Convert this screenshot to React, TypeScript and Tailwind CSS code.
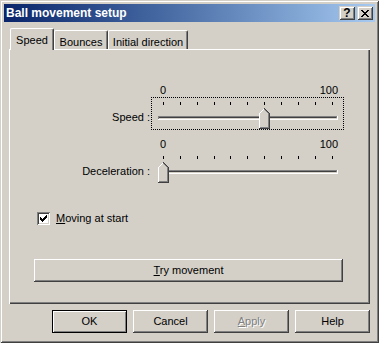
import React from "react";

const face = "bg-[#D4D0C8]";
const raised =
  "shadow-[inset_-1px_-1px_0_#404040,inset_1px_1px_0_#FFFFFF,inset_-2px_-2px_0_#808080,inset_2px_2px_0_#D4D0C8]";

const Thumb = ({ x }: { x: number }) => (
  <g transform={`translate(${x} 10)`}>
    <polygon points="0,5.5 5.5,0 11,5.5 11,21 0,21" fill="#D4D0C8" />
    <polyline points="0.5,20 0.5,5.5 5.5,0.5" fill="none" stroke="#FFFFFF" />
    <polyline points="5.5,1.5 9.5,5.5 9.5,19.5 1,19.5" fill="none" stroke="#808080" />
    <polyline points="5.5,0.5 10.5,5.5 10.5,20.5 0,20.5" fill="none" stroke="#404040" />
  </g>
);

const TrackBar = ({ thumbX, focused }: { thumbX: number; focused: boolean }) => (
  <div className="w-[193px]">
    <div className="flex h-[14px] items-center justify-between pl-[9px] pr-[6px] leading-[14px]">
      <span>0</span>
      <span>100</span>
    </div>
    <div
      className={`h-[33px] w-[193px] border border-dotted ${
        focused ? "border-black" : "border-transparent"
      }`}
    >
      <svg width={191} height={31} className="block" shapeRendering="crispEdges">
        {Array.from({ length: 11 }).map((_, i) => (
          <rect key={i} x={11 + Math.round(i * 16.87)} y={4} width={1} height={3} fill="#000" />
        ))}
        <rect x={6} y={18} width={180} height={4} fill="#FFFFFF" />
        <rect x={6} y={18} width={179} height={3} fill="#808080" />
        <rect x={7} y={19} width={177} height={1} fill="#404040" />
        <rect x={7} y={20} width={178} height={1} fill="#D4D0C8" />
        <Thumb x={thumbX} />
      </svg>
    </div>
  </div>
);

const Button = ({
  children,
  def,
  disabled,
}: {
  children: React.ReactNode;
  def?: boolean;
  disabled?: boolean;
}) => (
  <div
    className={`flex h-[23px] w-[75px] items-center justify-center ${face} ${
      def
        ? "border border-black shadow-[inset_1px_1px_0_#FFFFFF,inset_-1px_-1px_0_#808080]"
        : raised
    } ${disabled ? "text-[#808080] [text-shadow:1px_1px_0_#FFFFFF]" : "text-black"}`}
  >
    {children}
  </div>
);

export default function App() {
  return (
    <div
      className={`flex h-[343px] w-[379px] flex-col p-[4px] ${face} text-[11px] text-black font-['Liberation_Sans',Arial,sans-serif] shadow-[inset_1px_1px_0_#D4D0C8,inset_-1px_-1px_0_#404040,inset_2px_2px_0_#FFFFFF,inset_-2px_-2px_0_#808080]`}
    >
      {/* title bar */}
      <div className="flex h-[18px] items-center bg-gradient-to-r from-[#0A246A] to-[#A6CAF0] pl-[2px] pr-[2px]">
        <span className="flex-1 text-[12px] font-bold leading-[18px] text-white">
          Ball movement setup
        </span>
        <div className="flex gap-[2px]">
          <div
            className={`flex h-[14px] w-[16px] items-center justify-center ${face} shadow-[inset_1px_1px_0_#D4D0C8,inset_-1px_-1px_0_#404040,inset_2px_2px_0_#FFFFFF,inset_-2px_-2px_0_#808080] text-[12px] font-bold leading-none`}
          >
            ?
          </div>
          <div
            className={`flex h-[14px] w-[16px] items-center justify-center ${face} shadow-[inset_1px_1px_0_#D4D0C8,inset_-1px_-1px_0_#404040,inset_2px_2px_0_#FFFFFF,inset_-2px_-2px_0_#808080]`}
          >
            <svg width={8} height={7} shapeRendering="crispEdges">
              <path
                d="M0 0h2v1h-2zM6 0h2v1h-2zM1 1h2v1h-2zM5 1h2v1h-2zM2 2h4v1h-4zM3 3h2v1h-2zM2 4h4v1h-4zM1 5h2v1h-2zM5 5h2v1h-2zM0 6h2v1h-2zM6 6h2v1h-2z"
                fill="#000"
              />
            </svg>
          </div>
        </div>
      </div>

      <div className="flex flex-1 flex-col px-[5px]">
        {/* tabs */}
        <div className="mt-[6px] flex h-[21px] items-end">
          <div
            className={`relative z-10 -mb-px ml-[1px] flex h-[22px] w-[44px] items-start justify-center rounded-tl-[2px] rounded-tr-[2px] border-l border-t border-r border-l-white border-t-white border-r-[#404040] pt-[3px] ${face} shadow-[inset_-1px_0_0_#808080]`}
          >
            Speed
          </div>
          <div
            className={`flex h-[19px] w-[54px] items-start justify-center rounded-tl-[2px] rounded-tr-[2px] border-l border-t border-r border-l-white border-t-white border-r-[#404040] pt-[3px] ${face} shadow-[inset_-1px_0_0_#808080]`}
          >
            Bounces
          </div>
          <div
            className={`flex h-[19px] w-[80px] items-start justify-center rounded-tl-[2px] rounded-tr-[2px] border-l border-t border-r border-l-white border-t-white border-r-[#404040] pt-[3px] ${face} shadow-[inset_-1px_0_0_#808080]`}
          >
            Initial direction
          </div>
        </div>

        {/* tab panel */}
        <div
          className={`flex h-[255px] w-[361px] flex-col pt-[34px] ${face} shadow-[inset_1px_1px_0_#FFFFFF,inset_-1px_-1px_0_#404040,inset_-2px_-2px_0_#808080]`}
        >
          <div className="flex">
            <div className="w-[142px] pr-[1px] pt-[27px] text-right leading-[14px]">Speed :</div>
            <TrackBar thumbX={107} focused />
          </div>
          <div className="mt-[7px] flex">
            <div className="w-[142px] pr-[1px] pt-[27px] text-right leading-[14px]">
              Deceleration :
            </div>
            <TrackBar thumbX={6} focused={false} />
          </div>

          <div className="mt-[28px] flex h-[13px] items-center gap-[6px] pl-[28px]">
            <div className="flex h-[13px] w-[13px] items-center justify-center bg-white shadow-[inset_1px_1px_0_#808080,inset_-1px_-1px_0_#FFFFFF,inset_2px_2px_0_#404040,inset_-2px_-2px_0_#D4D0C8]">
              <svg width={7} height={7} shapeRendering="crispEdges">
                <path
                  d="M6 0h1v3h-1zM5 1h1v3h-1zM4 2h1v3h-1zM3 3h1v3h-1zM2 4h1v3h-1zM1 3h1v3h-1zM0 2h1v3h-1z"
                  fill="#000"
                />
              </svg>
            </div>
            <span className="leading-[13px]">
              <span className="underline underline-offset-[1px]">M</span>oving at start
            </span>
          </div>

          <div
            className={`ml-[25px] mt-[34px] flex h-[23px] w-[309px] items-center justify-center ${raised}`}
          >
            <span>
              <span className="underline underline-offset-[1px]">T</span>ry movement
            </span>
          </div>
        </div>

        {/* buttons */}
        <div className="mt-[6px] flex justify-end gap-[6px]">
          <Button def>OK</Button>
          <Button>Cancel</Button>
          <Button disabled>
            <span>
              <span className="underline underline-offset-[1px]">A</span>pply
            </span>
          </Button>
          <Button>Help</Button>
        </div>
      </div>
    </div>
  );
}
